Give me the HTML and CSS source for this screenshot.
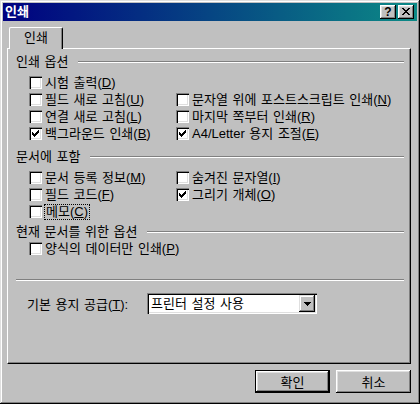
FILE: index.html
```html
<!DOCTYPE html>
<html lang="ko">
<head>
    <meta charset="UTF-8">
    <title>인쇄</title>
    <link rel="stylesheet" href="styles.css">
</head>
<body>
    <div class="dialog">
        <div class="titlebar">
            <span class="title">인쇄</span>
            <div class="caption-btns">
                <div class="cap cap-help">?</div>
                <div class="cap">
                    <svg width="8" height="7" viewBox="0 0 8 7"><path d="M0 0h2v1h-2zM6 0h2v1h-2zM1 1h2v1h-2zM5 1h2v1h-2zM2 2h4v1h-4zM3 3h2v1h-2zM2 4h4v1h-4zM1 5h2v1h-2zM5 5h2v1h-2zM0 6h2v1h-2zM6 6h2v1h-2z" fill="#000"/></svg>
                </div>
            </div>
        </div>

        <div class="content">
            <div class="tabs">
                <div class="tab">인쇄</div>
            </div>
            <div class="panel">

                <div class="group-head"><span>인쇄 옵션</span><i class="rule"></i></div>
                <div class="opts opts-first">
                    <label class="check"><span class="box"></span><span>시험 출력(<u>D</u>)</span></label>
                    <span></span>
                    <label class="check"><span class="box"></span><span>필드 새로 고침(<u>U</u>)</span></label>
                    <label class="check"><span class="box"></span><span>문자열 위에 포스트스크립트 인쇄(<u>N</u>)</span></label>
                    <label class="check"><span class="box"></span><span>연결 새로 고침(<u>L</u>)</span></label>
                    <label class="check"><span class="box"></span><span>마지막 쪽부터 인쇄(<u>R</u>)</span></label>
                    <label class="check"><span class="box checked"></span><span>백그라운드 인쇄(<u>B</u>)</span></label>
                    <label class="check"><span class="box checked"></span><span>A4/Letter 용지 조절(<u>E</u>)</span></label>
                </div>

                <div class="group-head head-second"><span>문서에 포함</span><i class="rule"></i></div>
                <div class="opts">
                    <label class="check"><span class="box"></span><span>문서 등록 정보(<u>M</u>)</span></label>
                    <label class="check"><span class="box"></span><span>숨겨진 문자열(<u>I</u>)</span></label>
                    <label class="check"><span class="box"></span><span>필드 코드(<u>F</u>)</span></label>
                    <label class="check"><span class="box checked"></span><span>그리기 개체(<u>O</u>)</span></label>
                    <label class="check"><span class="box"></span><span class="focus">메모(<u>C</u>)</span></label>
                </div>

                <div class="group-head head-third"><span>현재 문서를 위한 옵션</span><i class="rule"></i></div>
                <div class="opts opts-last">
                    <label class="check"><span class="box"></span><span>양식의 데이터만 인쇄(<u>P</u>)</span></label>
                </div>

                <div class="separator"></div>

                <div class="paper-row">
                    <span class="paper-label">기본 용지 공급(<u>T</u>):</span>
                    <div class="select">
                        <span class="select-text">프린터 설정 사용</span>
                        <span class="select-btn">
                            <svg width="7" height="4" viewBox="0 0 7 4"><path d="M0 0h7v1h-7zM1 1h5v1h-5zM2 2h3v1h-3zM3 3h1v1h-1z" fill="#000"/></svg>
                        </span>
                    </div>
                </div>

            </div>
            <div class="buttons">
                <div class="btn btn-default">확인</div>
                <div class="btn">취소</div>
            </div>
        </div>
    </div>
</body>
</html>
```

FILE: styles.css
```css
body {
    margin: 0;
    background: #c0c0c0;
    font-family: "Liberation Sans", "Noto Sans CJK KR", sans-serif;
    font-size: 13px;
    word-spacing: 1px;
    color: #000;
}
.dialog {
    width: 420px;
    height: 404px;
    box-sizing: border-box;
    padding: 3px;
    background: #c0c0c0;
    box-shadow: inset -1px -1px #000, inset 1px 1px #dfdfdf, inset -2px -2px #808080, inset 2px 2px #fff;
    display: flex;
    flex-direction: column;
}
.titlebar {
    height: 18px;
    display: flex;
    align-items: center;
    justify-content: space-between;
    padding: 0 3px 0 2px;
    background: linear-gradient(to right, #000080, #0c8a86);
    color: #fff;
    font-weight: bold;
    line-height: 18px;
}
.caption-btns {
    display: flex;
    gap: 2px;
}
.cap {
    width: 16px;
    height: 14px;
    box-sizing: border-box;
    background: #c0c0c0;
    box-shadow: inset -1px -1px #000, inset 1px 1px #fff, inset -2px -2px #808080, inset 2px 2px #dfdfdf;
    display: flex;
    align-items: center;
    justify-content: center;
    color: #000;
    padding-bottom: 1px;
}
.cap-help {
    font-size: 12px;
    font-weight: bold;
    line-height: 12px;
}
.content {
    flex: 1;
    display: flex;
    flex-direction: column;
    padding: 6px 6px 0 4px;
}
.tabs {
    display: flex;
    padding-left: 2px;
}
.tab {
    position: relative;
    z-index: 1;
    width: 54px;
    height: 22px;
    box-sizing: border-box;
    margin-bottom: -1px;
    background: #c0c0c0;
    border-top: 1px solid #fff;
    border-left: 1px solid #fff;
    border-right: 1px solid #000;
    border-radius: 2px 2px 0 0;
    box-shadow: inset -1px 0 #808080;
    text-align: center;
    line-height: 20px;
}
.panel {
    height: 316px;
    box-sizing: border-box;
    border: 1px solid;
    border-color: #fff #000 #000 #fff;
    box-shadow: inset -1px -1px #808080;
    padding: 5px 6px 0 8px;
    display: flex;
    flex-direction: column;
}
.group-head {
    height: 16px;
    display: flex;
    align-items: center;
    gap: 10px;
    line-height: 16px;
}
.rule {
    flex: 1;
    border-top: 1px solid #808080;
    border-bottom: 1px solid #fff;
}
.head-second {
    margin-top: 7px;
}
.head-third {
    margin-top: 4px;
}
.opts {
    display: grid;
    grid-template-columns: 147px 1fr;
    grid-auto-rows: 17px;
    padding-left: 13px;
    margin-top: 4px;
}
.opts-last {
    margin-top: 0;
}
.check {
    display: flex;
    align-items: center;
    gap: 3px;
    line-height: 17px;
    white-space: nowrap;
}
.box {
    width: 13px;
    height: 13px;
    flex: none;
    box-sizing: border-box;
    background: #fff;
    box-shadow: inset 1px 1px #808080, inset 2px 2px #000, inset -1px -1px #fff, inset -2px -2px #dfdfdf;
}
.box.checked {
    background: #fff url("data:image/svg+xml,%3Csvg xmlns='http://www.w3.org/2000/svg' width='13' height='13'%3E%3Cpath d='M9 3h1v3h-1zM8 4h1v3h-1zM7 5h1v3h-1zM6 6h1v3h-1zM5 7h1v3h-1zM4 6h1v3h-1zM3 5h1v3h-1z' fill='%23000'/%3E%3C/svg%3E") no-repeat;
}
.focus {
    outline: 1px dotted #000;
    outline-offset: 0;
    padding: 0 1px;
    line-height: 14px;
}
.separator {
    margin-top: 22px;
    border-top: 1px solid #808080;
    border-bottom: 1px solid #fff;
}
.paper-row {
    display: flex;
    align-items: center;
    margin-top: 12px;
    padding-left: 11px;
}
.paper-label {
    width: 120px;
}
.select {
    width: 170px;
    height: 21px;
    box-sizing: border-box;
    background: #fff;
    box-shadow: inset 1px 1px #808080, inset 2px 2px #000, inset -1px -1px #fff, inset -2px -2px #dfdfdf;
    display: flex;
    align-items: center;
    justify-content: space-between;
    padding: 2px;
}
.select-text {
    padding-left: 2px;
    line-height: 17px;
}
.select-btn {
    width: 16px;
    height: 17px;
    box-sizing: border-box;
    background: #c0c0c0;
    box-shadow: inset -1px -1px #000, inset 1px 1px #dfdfdf, inset -2px -2px #808080, inset 2px 2px #fff;
    display: flex;
    align-items: center;
    justify-content: center;
}
.buttons {
    display: flex;
    justify-content: flex-end;
    gap: 6px;
    margin-top: 6px;
}
.btn {
    width: 75px;
    height: 23px;
    box-sizing: border-box;
    background: #c0c0c0;
    box-shadow: inset -1px -1px #000, inset 1px 1px #fff, inset -2px -2px #808080, inset 2px 2px #dfdfdf;
    display: flex;
    align-items: center;
    justify-content: center;
}
.btn-default {
    border: 1px solid #000;
}
```
